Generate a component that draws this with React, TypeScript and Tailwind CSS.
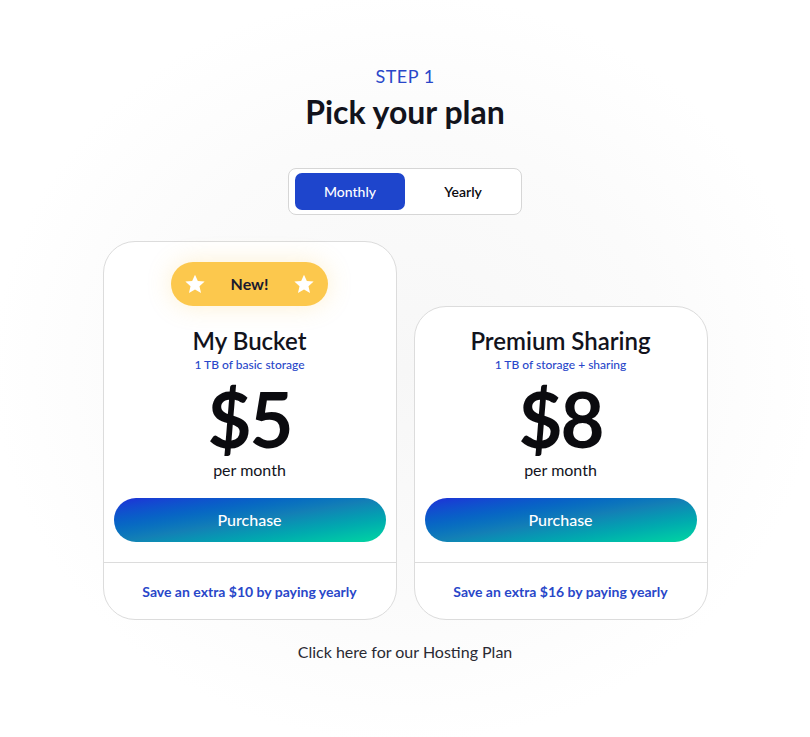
import React, { useState } from "react";

const Star = () => (
  <svg width="22" height="22" viewBox="0 0 24 24" fill="#ffffff">
    <path d="M12 1.8l3.1 6.9 7.4.7-5.6 5 1.7 7.4L12 17.9l-6.6 3.9 1.7-7.4-5.6-5 7.4-.7z" />
  </svg>
);

type Plan = {
  name: string;
  desc: string;
  price: string;
  save: string;
  badge?: boolean;
};

const plans: Plan[] = [
  { name: "My Bucket", desc: "1 TB of basic storage", price: "$5", save: "Save an extra $10 by paying yearly", badge: true },
  { name: "Premium Sharing", desc: "1 TB of storage + sharing", price: "$8", save: "Save an extra $16 by paying yearly" },
];

const PlanCard = ({ plan }: { plan: Plan }) => (
  <div className="w-[294px] bg-white border border-[#dcdcdc] rounded-[32px] flex flex-col">
    <div className="flex flex-col items-center px-[10px] pt-[20px] pb-[20px]">
      {plan.badge && (
        <div className="w-[157px] h-[44px] mb-[21px] rounded-full bg-[#fcc84d] flex items-center justify-between px-[13px] shadow-[0_0_24px_rgba(252,200,77,0.25)]">
          <Star />
          <span className="text-[16px] font-bold text-[#1a1a2e]">New!</span>
          <Star />
        </div>
      )}
      <h2 className="text-[24px] leading-[28px] font-semibold text-[#12131c]">{plan.name}</h2>
      <p className="text-[12px] leading-[16px] mt-[2px] font-medium text-[#2947c9]">{plan.desc}</p>
      <div className="text-[76px] leading-[72px] mt-[10px] font-bold text-[#0b0b0f] tracking-[-2px]">{plan.price}</div>
      <div className="text-[16px] leading-[20px] mt-[5px] text-[#12131c]">per month</div>
      <button className="mt-[18px] w-full h-[44px] rounded-full text-white text-[16px] font-medium bg-gradient-to-br from-[#1f2bd8] via-[#137fb6] to-[#05d7a0]">
        Purchase
      </button>
    </div>
    <div className="border-t border-[#dcdcdc] h-[57px] flex items-center justify-center">
      <span className="text-[14px] font-bold text-[#2947c9]">{plan.save}</span>
    </div>
  </div>
);

const App = () => {
  const [billing, setBilling] = useState("monthly");

  return (
    <div
      className="min-h-screen w-full flex flex-col items-center bg-[radial-gradient(ellipse_at_center,#f7f7f7_0%,#fbfbfb_45%,#ffffff_72%)] pt-[64px]"
      style={{ fontFamily: "Lato, 'Open Sans', sans-serif" }}
    >
      <p className="text-[18px] leading-[24px] tracking-[0.5px] text-[#2947c9]">STEP 1</p>
      <h1 className="text-[32px] leading-[40px] mt-[4px] font-bold text-[#12131c]">Pick your plan</h1>

      <div className="mt-[36px] w-[234px] h-[47px] border border-[#d6d6d6] rounded-[8px] bg-white flex items-center px-[6px] gap-[6px]">
        <button
          onClick={() => setBilling("monthly")}
          className={`w-[110px] h-[37px] rounded-[7px] text-[14px] font-medium ${
            billing === "monthly" ? "bg-[#1e45cc] text-white" : "text-[#0b0b0f] font-semibold"
          }`}
        >
          Monthly
        </button>
        <button
          onClick={() => setBilling("yearly")}
          className={`flex-1 h-[37px] rounded-[7px] text-[14px] font-semibold ${
            billing === "yearly" ? "bg-[#1e45cc] text-white" : "text-[#0b0b0f]"
          }`}
        >
          Yearly
        </button>
      </div>

      <div className="mt-[26px] flex items-end gap-[17px]">
        {plans.map((p) => (
          <PlanCard key={p.name} plan={p} />
        ))}
      </div>

      <p className="mt-[22px] text-[16px] leading-[20px] text-[#2a2a33]">Click here for our Hosting Plan</p>
    </div>
  );
};

export default App;
